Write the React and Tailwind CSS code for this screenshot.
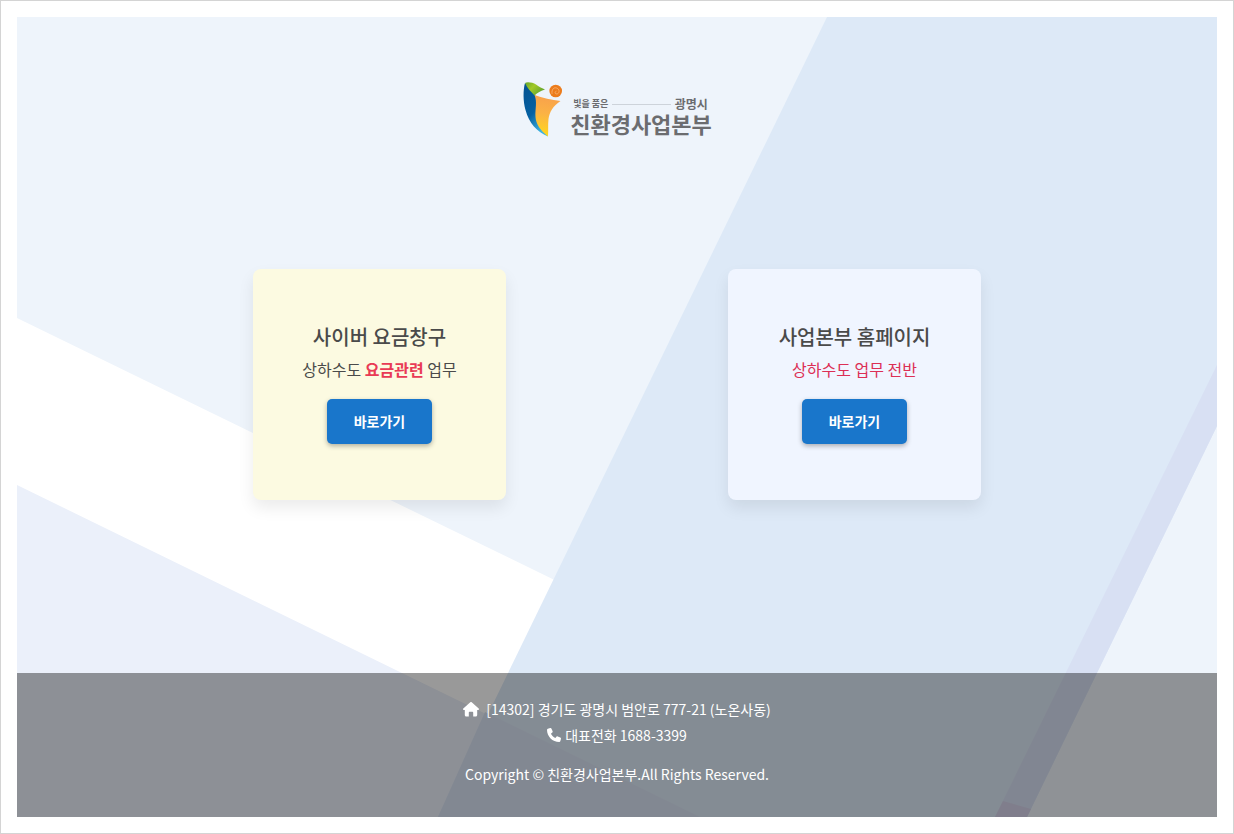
import { FaPhone } from "react-icons/fa6";

function Backdrop() {
  return (
    <svg
      aria-hidden="true"
      className="absolute inset-0 h-full w-full"
      viewBox="0 0 1200 800"
      preserveAspectRatio="none"
    >
      <rect width="1200" height="800" fill="#eef4fb" />
      <path d="M0 301 L560 574 L560 800 L0 800 Z" fill="#ffffff" />
      <path d="M0 468 L680 800 L0 800 Z" fill="#ebf0fa" />
      <path d="M810 0 H1200 V409 L1010 800 H421 Z" fill="#dde9f7" />
      <path d="M468 695 L683 800 H421 Z" fill="#d9e3f4" />
      <path d="M1200 348 V409 L1010 800 H978 Z" fill="#d8e0f3" />
      <path d="M986 784 L1014 792 L1010 800 H978 Z" fill="#d5d3ea" />
    </svg>
  );
}

function HouseIcon() {
  return (
    <svg aria-hidden="true" className="h-4 w-4" viewBox="0 0 16 16" fill="currentColor">
      <path d="M7.300 1.300 C7.700 0.900 8.300 0.900 8.700 1.300 L15.700 7.600 C16.300 8.200 15.900 9 15.200 9 H14.200 V14 C14.200 14.900 13.600 15.500 12.700 15.500 H10.200 V11.800 C10.200 11.200 9.800 10.800 9.200 10.800 H6.800 C6.200 10.800 5.800 11.200 5.800 11.800 V15.500 H3.300 C2.400 15.500 1.800 14.900 1.800 14 V9 H0.800 C0.100 9 -0.300 8.200 0.300 7.600 Z" />
    </svg>
  );
}

function Emblem() {
  return (
    <svg aria-hidden="true" className="h-14 w-10 shrink-0" viewBox="0 0 40 56">
      <defs>
        <linearGradient id="emblem-blue" x1="0" y1="0" x2="0.5" y2="1">
          <stop offset="0" stopColor="#04518f" />
          <stop offset="0.6" stopColor="#0561a3" />
          <stop offset="1" stopColor="#3fb2df" />
        </linearGradient>
        <linearGradient id="emblem-orange" x1="0.5" y1="0" x2="0.4" y2="1">
          <stop offset="0" stopColor="#f8a04c" />
          <stop offset="0.45" stopColor="#fbb245" />
          <stop offset="1" stopColor="#ffd91c" />
        </linearGradient>
        <linearGradient id="emblem-green" x1="0" y1="0" x2="1" y2="0.6">
          <stop offset="0" stopColor="#63a62b" />
          <stop offset="0.45" stopColor="#a3c927" />
          <stop offset="1" stopColor="#5fa22e" />
        </linearGradient>
      </defs>
      <path
        d="M3 2 C1 9 1 20 3.500 29 C7 42 15 51 26 55.500 C20 47 18 38 19 28 L13 14 Z"
        fill="url(#emblem-blue)"
      />
      <path
        d="M12.500 14 C20 17 30 19 38.500 20 C31 25 27.500 31 26.500 38 C25.800 44 26.500 50 26 55.500 C18 49 14 43 13.500 36 C13 28 15.500 21 12.500 14 Z"
        fill="url(#emblem-orange)"
      />
      <path
        d="M3 2 C5 0.500 11 1.500 14 3.500 C17 5.500 19 7 23 8.500 C18 10 15 12 12.500 14.500 C9 10.500 5 7 3 2 Z"
        fill="url(#emblem-green)"
      />
      <circle cx="33.700" cy="10" r="6.300" fill="#ec7c1c" />
      <path
        d="M30 12.500 C29.300 8.500 32 6 34.500 7 C37.500 8 38 11.500 35.500 12.800 C33.300 13.500 32 11.300 34 10.300"
        fill="none"
        stroke="#f9b878"
        strokeWidth="0.8"
        strokeLinecap="round"
      />
    </svg>
  );
}

function Logo() {
  return (
    <h1>
      <a href="#home" className="flex items-end gap-2">
        <Emblem />
        <span className="flex flex-col pb-0.5 text-[#6b6c6f]">
          <span className="flex items-center gap-1 pr-1 pl-[3px] leading-[14px]">
            <span className="text-[9px] font-bold">빛을 품은</span>
            <span className="h-px flex-1 bg-[#cdd3da]" />
            <span className="text-[12px] font-bold">광명시</span>
          </span>
          <span className="text-[22px] leading-6 font-bold">친환경사업본부</span>
        </span>
      </a>
    </h1>
  );
}

function Card({ title, tone, href, children }) {
  return (
    <section
      className={`flex w-full max-w-[253px] flex-col items-center rounded-lg px-4 py-14 text-center text-[#4a4a4a] shadow-[0_8px_16px_rgba(0,0,0,0.08)] ${tone}`}
    >
      <h2 className="text-[20px] leading-6 font-medium">{title}</h2>
      <p className="mt-2 text-[16px] leading-6 font-normal">{children}</p>
      <a
        href={href}
        className="mt-[18px] rounded-[5px] bg-[#1976cb] px-[27px] py-3 text-[14px] leading-[21px] font-bold text-white shadow-[0_2px_5px_rgba(0,0,0,0.3)]"
      >
        바로가기
      </a>
    </section>
  );
}

export default function App() {
  return (
    <div className="flex min-h-screen flex-col border border-[#d4d4d4] bg-white p-4 font-['Noto_Sans_CJK_KR','Noto_Sans',sans-serif]">
      <div className="relative isolate flex flex-1 flex-col">
        <Backdrop />
        <header className="relative flex justify-center pt-16">
          <Logo />
        </header>
        <main className="relative mx-auto grid w-full max-w-[950px] flex-1 grid-cols-2 items-start justify-items-center pt-[132px] pb-10">
          <Card title="사이버 요금창구" tone="bg-[#fcfae1]" href="#billing">
            상하수도 <strong className="font-bold text-[#e93a55]">요금관련</strong> 업무
          </Card>
          <Card title="사업본부 홈페이지" tone="bg-[#f0f5ff]" href="#office">
            <span className="text-[#dc2f55]">상하수도 업무 전반</span>
          </Card>
        </main>
        <footer className="relative bg-black/40 px-4 pt-[23px] pb-[30px] text-center text-[14px] leading-[26px] text-white">
          <address className="not-italic">
            <p className="flex items-center justify-center gap-[7px]">
              <HouseIcon />
              [14302] 경기도 광명시 범안로 777-21 (노온사동)
            </p>
            <p className="flex items-center justify-center gap-1">
              <FaPhone aria-hidden="true" className="h-[14px] w-[14px]" />
              대표전화 1688-3399
            </p>
          </address>
          <p className="mt-[13px]">Copyright © 친환경사업본부.All Rights Reserved.</p>
        </footer>
      </div>
    </div>
  );
}
